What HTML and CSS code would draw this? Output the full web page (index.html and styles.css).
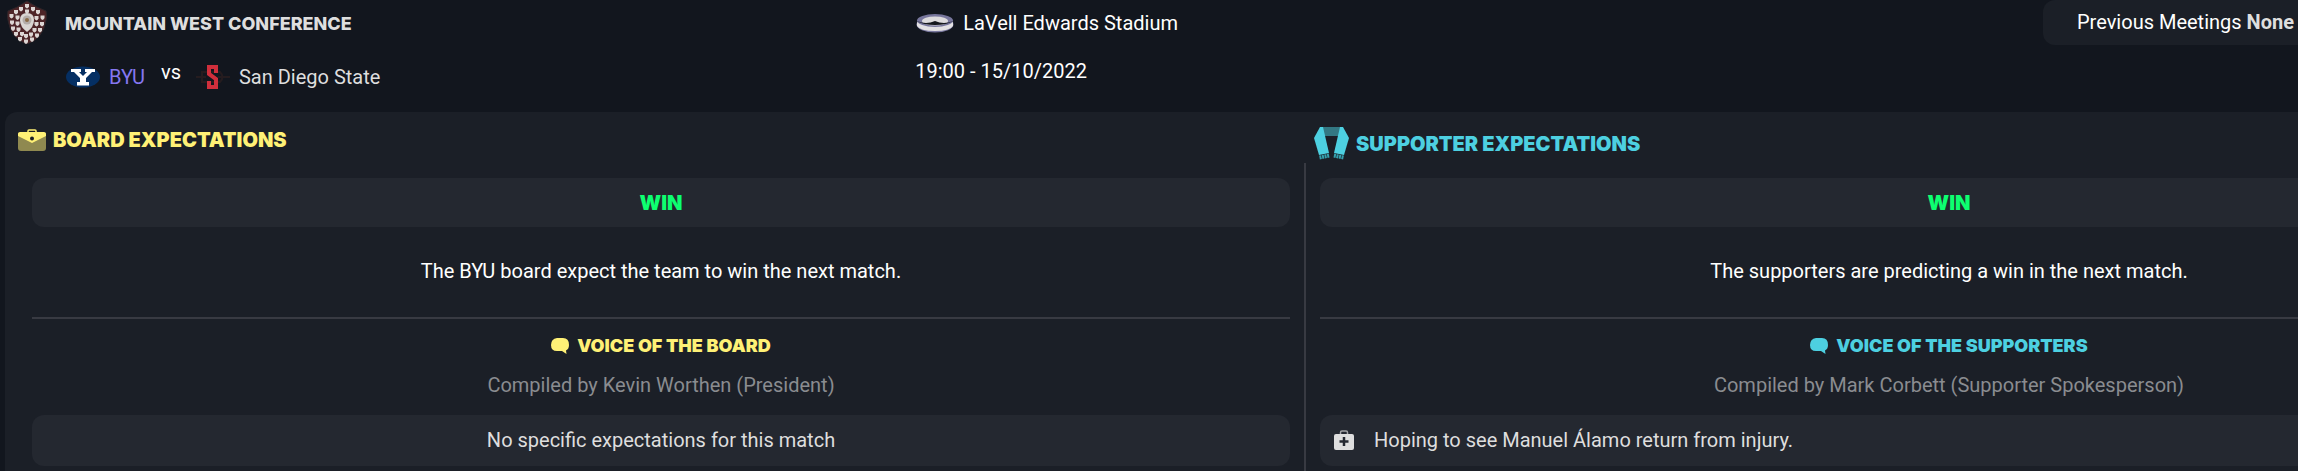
FILE: index.html
```html
<!DOCTYPE html>
<html lang="en">
  <head>
    <meta charset="utf-8" />
    <title>Match Expectations</title>
    <meta name="viewport" content="width=device-width, initial-scale=1.0" />
    <link rel="stylesheet" href="styles.css">
  </head>
  <body>
    <header class="match">
      <div class="fixture">
        <svg class="shield" width="42" height="44" viewBox="0 0 42 44">
          <path d="M21 1 Q31 8 40 11 Q41 16 40 20 Q37 39 21 44 Q5 39 2 20 Q1 16 2 11 Q11 8 21 1z" fill="#4d2427" stroke="#2f2529" />
          <g fill="#dcd5d3">
            <path id="s" d="M19 4h4v2.500q-.5 1.500-2 2-1.500-.5-2-2z" />
            <use href="#s" x="0" y="5.500" />
            <use href="#s" x="-6" y="3" />
            <use href="#s" x="6" y="3" />
            <use href="#s" x="-11" y="6" />
            <use href="#s" x="11" y="6" />
            <use href="#s" x="-15.500" y="10" />
            <use href="#s" x="15.500" y="11.500" />
            <use href="#s" x="-9.500" y="11.500" />
            <use href="#s" x="9.500" y="12" />
            <use href="#s" x="-15" y="16.500" />
            <use href="#s" x="15" y="18" />
            <use href="#s" x="-9.500" y="17.500" />
            <use href="#s" x="9.500" y="18" />
            <use href="#s" x="-14" y="22.500" />
            <use href="#s" x="13" y="24" />
            <use href="#s" x="-8.500" y="23.500" />
            <use href="#s" x="7.500" y="24" />
            <use href="#s" x="-11" y="28" />
            <use href="#s" x="10" y="29.500" />
            <use href="#s" x="-5" y="28" />
            <use href="#s" x="4" y="28.500" />
            <use href="#s" x="-7" y="33" />
            <use href="#s" x="5" y="33.500" />
            <use href="#s" x="-1" y="30" />
            <use href="#s" x="-1" y="35.500" />
          </g>
          <path d="M14 20q0-7 7-7t7 7q0 7-7 12q-7-5-7-12z" fill="#d9d5d2" />
          <circle cx="21" cy="20" r="4.500" fill="#b3aca8" />
          <circle cx="21" cy="20" r="2" fill="#8a6a46" />
        </svg>
        <h1 class="competition">Mountain West Conference</h1>
        <div class="teams">
          <svg width="36" height="24" viewBox="0 0 36 24">
            <ellipse cx="18" cy="12" rx="17" ry="10.500" fill="#052f63" />
            <path d="M6 4h10v3h-2l4 4 4-4h-2V4h10v3h-3l-6 6v4h3v3.500H12V17h3v-4L9 7H6z" fill="#fff" />
          </svg>
          <a class="team mine" href="#byu">BYU</a>
          <span class="versus">vs</span>
          <svg width="36" height="26" viewBox="0 0 36 26">
            <path d="M1 13h10M23 13h12M7 8h18q5 5 0 10H7z" stroke="#251c1f" stroke-width="2" fill="none" />
            <path d="M21 9V3h-7v7l7 5v8h-7v-6" fill="none" stroke="#d02f3c" stroke-width="4" />
          </svg>
          <a class="team" href="#san-diego-state">San Diego State</a>
        </div>
      </div>
      <div class="venue">
        <p class="stadium">
          <svg width="40" height="20" viewBox="0 0 40 20">
            <ellipse cx="20" cy="11.500" rx="18.500" ry="8" fill="#77769c" />
            <path d="M2 9q18 8 36 0v4q-3 5-18 5t-18-5z" fill="#e3e1e3" />
            <ellipse cx="20" cy="7.500" rx="18" ry="6.500" fill="#77769c" />
            <ellipse cx="20" cy="8" rx="13" ry="4.500" fill="#dddbdd" />
            <path d="M2 8q9 4 18 0 9 4 18 0-6 4-18 4t-18-4z" fill="#15171d" />
          </svg>
          LaVell Edwards Stadium
        </p>
        <p class="kickoff">19:00 - 15/10/2022</p>
      </div>
      <p class="meetings">Previous Meetings <strong>None</strong></p>
    </header>

    <main class="panel">
      <section class="column board">
        <h2 class="title">
          <svg width="28" height="22" viewBox="0 0 28 22">
            <path d="M0 4h28v15q0 3-3 3H3q-3 0-3-3z" fill="#8f8950" />
            <path d="M10 3V2q0-1 1-1h6q1 0 1 1v1" fill="none" stroke="#fff176" stroke-width="1.500" />
            <path d="M2 3h24q2 0 2 2v2l-14 7L0 7V5q0-2 2-2z" fill="#fff176" />
            <circle cx="14" cy="9.500" r="2" fill="#1b1f27" />
          </svg>
          Board Expectations
        </h2>
        <p class="card result">Win</p>
        <p class="summary">The BYU board expect the team to win the next match.</p>
        <hr class="rule" />
        <h3 class="voice">
          <svg width="18" height="16" viewBox="0 0 18 16">
            <path d="M6 0h6q6 0 6 7 0 4-3 5.500l.5 3.500-4.500-3H6q-6 0-6-6t6-7z" fill="currentColor" />
          </svg>
          Voice of the Board
        </h3>
        <p class="compiled">Compiled by Kevin Worthen (President)</p>
        <p class="card note centered">No specific expectations for this match</p>
      </section>

      <div class="divider"></div>

      <section class="column supporters">
        <h2 class="title">
          <svg width="35" height="33" viewBox="0 0 35 33">
            <path d="M8 0h19v9H10z" fill="#337883" />
            <path d="M6 0h3l6 26-10 2L0 11z" fill="#4dd0e1" />
            <path d="M29 0h-3l-6 26 10 2 5-17z" fill="#4dd0e1" />
            <path d="M5.500 30.500l10-2M29.500 30.500l-10-2" stroke="#35a0ae" stroke-width="4" stroke-dasharray="2 .6" />
          </svg>
          Supporter Expectations
        </h2>
        <p class="card result">Win</p>
        <p class="summary">The supporters are predicting a win in the next match.</p>
        <hr class="rule" />
        <h3 class="voice">
          <svg width="18" height="16" viewBox="0 0 18 16">
            <path d="M6 0h6q6 0 6 7 0 4-3 5.500l.5 3.500-4.500-3H6q-6 0-6-6t6-7z" fill="currentColor" />
          </svg>
          Voice of the Supporters
        </h3>
        <p class="compiled">Compiled by Mark Corbett (Supporter Spokesperson)</p>
        <p class="card note">
          <svg width="20" height="20" viewBox="0 0 20 20">
            <path d="M6.500 4V2.500q0-1.500 1.500-1.500h4q1.500 0 1.500 1.500V4" fill="none" stroke="#a3a4a7" stroke-width="1.500" />
            <rect y="4" width="20" height="16" rx="2" fill="#dedede" />
            <path d="M10 7v9M5.500 11.500h9" stroke="#242830" stroke-width="2.500" />
          </svg>
          Hoping to see Manuel Álamo return from injury.
        </p>
      </section>
    </main>
  </body>
</html>
```
FILE: styles.css
```css
html,
body {
  margin: 0;
  padding: 0;
  height: 100%;
  overflow: hidden;
  font: 20px/24px Roboto, sans-serif;
  color: #fff;
  background: #12161e;
}
body {
  display: flex;
  flex-direction: column;
}
h1,
h2,
h3,
p {
  margin: 0;
}
svg {
  flex: none;
}

.match {
  display: grid;
  grid-template-columns: calc(40% - 4px) 1fr auto;
  align-items: start;
  height: 112px;
}
.fixture {
  display: grid;
  grid-template-columns: 59px 1fr;
  grid-template-rows: 48px auto;
  padding-left: 6px;
}
.competition {
  padding-top: 12px;
  font: 800 18px/24px Inter, sans-serif;
  text-transform: uppercase;
  color: #dedede;
}
.teams {
  grid-column: 2;
  display: flex;
  align-items: center;
  height: 58px;
}
.team {
  margin-left: 8px;
  color: #dedede;
  text-decoration: none;
}
.mine {
  color: #8577f0;
}
.versus {
  margin: 0 14px 10px 16px;
}
.stadium {
  display: flex;
  align-items: center;
  gap: 8px;
  height: 45px;
}
.kickoff {
  padding-top: 14px;
}
.meetings {
  padding: 10px 4px 11px 34px;
  border-radius: 12px 0 0 12px;
  background: #1b1f27;
}
.meetings strong {
  color: #dedede;
}

/* the panel runs on past the right edge of the window */
.panel {
  flex: 1;
  display: grid;
  grid-template-columns: 1fr 2px 1fr;
  width: calc(100% + 302px);
  margin-left: 5px;
  border-radius: 12px 0 0 0;
  background: #1b1f27;
}
.divider {
  margin-top: 51px;
  background: #383a42;
}
.board {
  padding: 0 14px 0 27px;
  --accent: #fff176;
}
.supporters {
  padding: 0 27px 0 14px;
  --accent: #4dd0e1;
}
.title {
  display: flex;
  align-items: center;
  gap: 7px;
  font: 900 20px/24px Inter, sans-serif;
  text-transform: uppercase;
  color: var(--accent);
}
.board .title {
  height: 56px;
  margin: 0 0 10px -14px;
}
.supporters .title {
  height: 63px;
  margin: 0 0 3px -6px;
}
.card {
  border-radius: 12px;
  background: #242830;
}
.result {
  padding: 13px 0 12px;
  font: 900 20px/24px Inter, sans-serif;
  text-align: center;
  text-transform: uppercase;
  color: #0dff70;
}
.summary {
  padding: 32px 0 34px;
  text-align: center;
}
.rule {
  height: 2px;
  margin: 0;
  border: 0;
  background: #383a42;
}
.voice {
  display: flex;
  align-items: center;
  justify-content: center;
  gap: 8px;
  padding: 15px 0;
  font: 900 18px/24px Inter, sans-serif;
  text-transform: uppercase;
  color: var(--accent);
}
.compiled {
  padding-bottom: 18px;
  text-align: center;
  color: #8a8c90;
}
.note {
  display: flex;
  align-items: center;
  gap: 20px;
  height: 49px;
  padding: 0 14px 2px;
  color: #dedede;
}
.centered {
  justify-content: center;
}
```
